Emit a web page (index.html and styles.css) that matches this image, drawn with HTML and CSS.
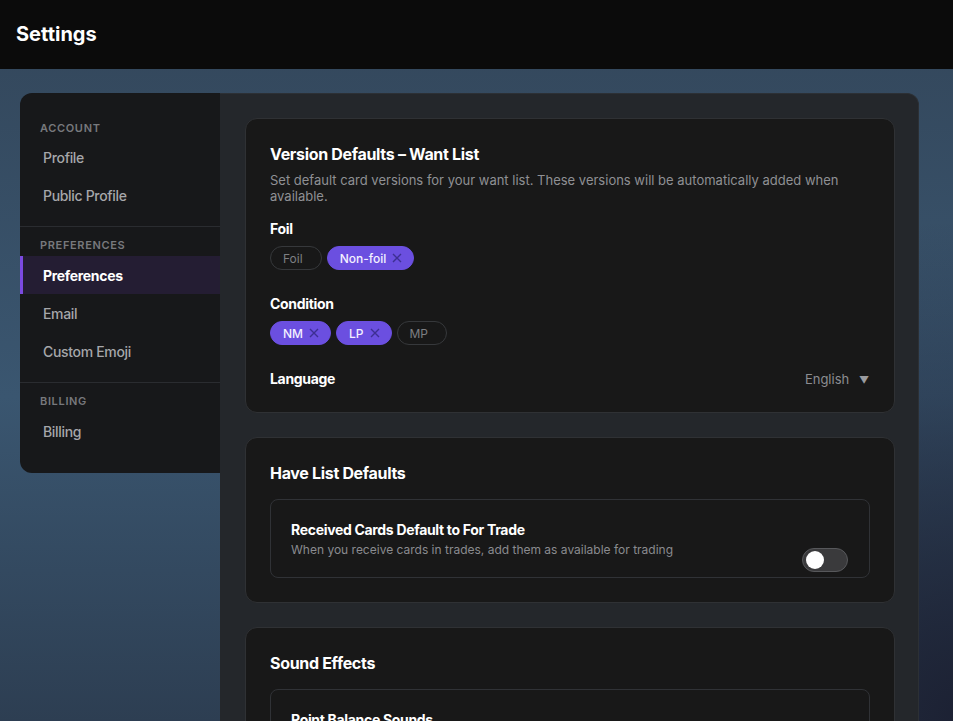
FILE: index.html
```html
<!DOCTYPE html>
<html lang="en">
<head>
<meta charset="utf-8">
<title>Settings</title>
<link rel="stylesheet" href="styles.css">
</head>
<body>
<header class="topbar"><h1 class="page-title">Settings</h1></header>
<main class="page">
  <div class="shell">
    <nav class="sidebar">
      <div class="nav-section">
        <div class="nav-label">ACCOUNT</div>
        <a class="nav-item">Profile</a>
        <a class="nav-item">Public Profile</a>
      </div>
      <div class="nav-section">
        <div class="nav-label">PREFERENCES</div>
        <a class="nav-item active">Preferences</a>
        <a class="nav-item">Email</a>
        <a class="nav-item">Custom Emoji</a>
      </div>
      <div class="nav-section">
        <div class="nav-label">BILLING</div>
        <a class="nav-item">Billing</a>
      </div>
    </nav>
    <section class="content">
      <div class="card">
        <h2 class="card-title">Version Defaults – Want List</h2>
        <p class="card-desc">Set default card versions for your want list. These versions will be automatically added when available.</p>
        <div class="field">
          <div class="field-label">Foil</div>
          <div class="chips">
            <span class="chip">Foil</span>
            <span class="chip on">Non-foil <svg class="x" viewBox="0 0 10 10"><path d="M1 1L9 9M9 1L1 9"/></svg></span>
          </div>
        </div>
        <div class="field">
          <div class="field-label">Condition</div>
          <div class="chips">
            <span class="chip on">NM <svg class="x" viewBox="0 0 10 10"><path d="M1 1L9 9M9 1L1 9"/></svg></span>
            <span class="chip on">LP <svg class="x" viewBox="0 0 10 10"><path d="M1 1L9 9M9 1L1 9"/></svg></span>
            <span class="chip">MP</span>
          </div>
        </div>
        <div class="lang-row">
          <div class="field-label">Language</div>
          <div class="select">English <span class="caret">▼</span></div>
        </div>
      </div>
      <div class="card">
        <h2 class="card-title">Have List Defaults</h2>
        <div class="option">
          <div class="option-text">
            <div class="option-title">Received Cards Default to For Trade</div>
            <div class="option-desc">When you receive cards in trades, add them as available for trading</div>
          </div>
          <span class="toggle"><span class="knob"></span></span>
        </div>
      </div>
      <div class="card">
        <h2 class="card-title">Sound Effects</h2>
        <div class="option">
          <div class="option-text">
            <div class="option-title">Point Balance Sounds</div>
            <div class="option-desc">Play a sound when your point balance changes</div>
          </div>
          <span class="toggle"><span class="knob"></span></span>
        </div>
      </div>
    </section>
  </div>
</main>
</body>
</html>
```

FILE: styles.css
```css
* { box-sizing: border-box; }
html, body { margin: 0; height: 100%; }
body {
  font-family: Inter, "Noto Sans", sans-serif;
  color: #fff;
  background:
    radial-gradient(ellipse 420px 500px at 960px 720px, #1c2133 0%, rgba(28,33,51,0) 100%),
    linear-gradient(180deg, #33465a 0%, #3a5670 55%, #2d3e52 100%);
  overflow: hidden;
  letter-spacing: -0.02em;
}
.topbar {
  height: 69px;
  background: #0b0b0b;
  display: flex;
  align-items: center;
  padding-left: 16px;
  padding-bottom: 1px;
}
.page-title { margin: 0; font-size: 20px; font-weight: 700; letter-spacing: 0; }
.page { padding: 24px 0 0 20px; }
.shell {
  width: 899px;
  display: flex;
  align-items: flex-start;
}
.sidebar {
  width: 200px;
  flex: none;
  background: #17181a;
  border-radius: 12px 0 0 12px;
  padding: 16px 0 11px;
}
.nav-section { padding: 11px 0 12px; border-top: 1px solid #2a2c30; }
.nav-section:first-child { border-top: 0; padding-top: 12px; }
.nav-label {
  font-size: 11px;
  font-weight: 600;
  color: #77797d;
  letter-spacing: 0.06em;
  padding-left: 20px;
  line-height: 14px;
  margin-bottom: 4px;
}
.nav-section:first-child .nav-label { margin-bottom: 3px; }
.nav-item {
  display: flex;
  align-items: center;
  height: 38px;
  padding-left: 20px;
  border-left: 3px solid transparent;
  font-size: 14px;
  font-weight: 500;
  color: #a6a7aa;
}
.nav-item.active {
  background: #241d33;
  border-left-color: #7b4ae0;
  color: #fff;
  font-weight: 700;
}
.content {
  flex: 1;
  min-height: 700px;
  background: #24272b;
  border: 1px solid #2c3035;
  border-left: 0;
  border-radius: 0 12px 0 0;
  padding: 24px 23px 24px 25px;
  display: flex;
  flex-direction: column;
  gap: 24px;
}
.card {
  background: #181818;
  border: 1px solid #2f3134;
  border-radius: 12px;
  padding: 24px;
}
.card-title { margin: 0; font-size: 16px; font-weight: 700; line-height: 22px; }
.card-desc { margin: 7px 0 0; font-size: 13px; line-height: 16px; color: #8f9094; letter-spacing: 0; }
.field { margin-top: 16px; }
.field + .field { margin-top: 25px; }
.field-label { font-size: 14px; font-weight: 700; line-height: 18px; }
.chips { display: flex; gap: 5px; margin-top: 8px; }
.chip {
  height: 24px;
  border-radius: 12px;
  border: 1px solid #36383b;
  padding: 0 18px 0 12px;
  font-size: 12px;
  letter-spacing: 0;
  color: #7d7f83;
  display: inline-flex;
  align-items: center;
  gap: 6px;
}
.chip.on {
  background: #6b4fe0;
  border-color: #6b4fe0;
  color: #f4f1ff;
  font-weight: 500;
  padding: 0 11px 0 12px;
}
.x { width: 10px; height: 10px; fill: none; stroke: #3d2f92; stroke-width: 1.4; }
.lang-row {
  display: flex;
  justify-content: space-between;
  align-items: center;
  margin-top: 25px;
}
.select { font-size: 13px; color: #8c8d91; padding-right: 1px; letter-spacing: 0; }
.caret { font-size: 10px; margin-left: 6px; color: #9a9b9f; }
.option {
  margin-top: 15px;
  border: 1px solid #303236;
  border-radius: 8px;
  padding: 21px 21px 19px 20px;
  display: flex;
  justify-content: space-between;
  align-items: flex-end;
}
.option-title { font-size: 14px; font-weight: 700; line-height: 18px; }
.option-desc { font-size: 12px; line-height: 16px; color: #8a8b8f; margin-top: 3px; letter-spacing: 0; }
.toggle {
  width: 46px;
  height: 24px;
  border-radius: 12px;
  background: #3a3a3c;
  border: 1px solid #57585b;
  margin-bottom: -14px;
  display: flex;
  align-items: center;
  padding-left: 3px;
  flex: none;
}
.knob { width: 18px; height: 18px; border-radius: 50%; background: #fff; }
```
